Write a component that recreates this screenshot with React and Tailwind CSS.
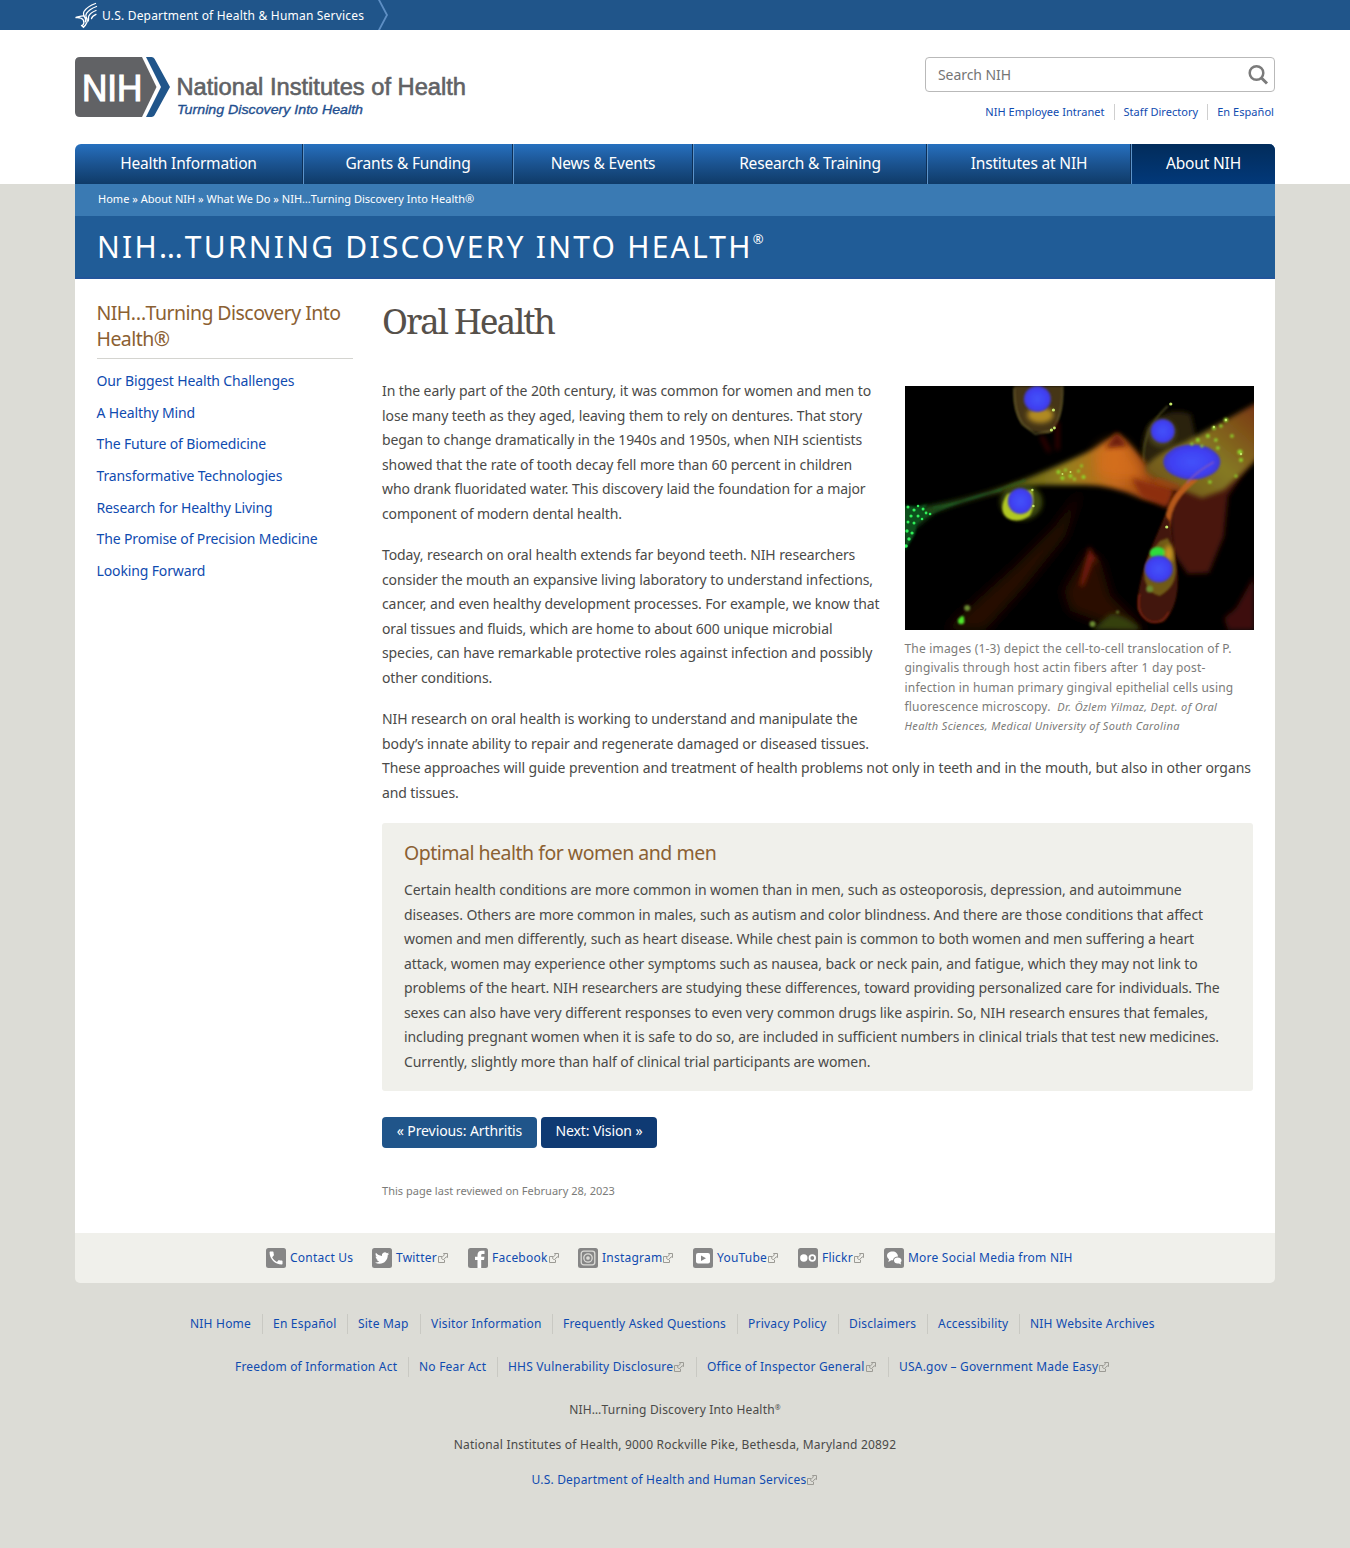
import React from "react";

const Ext = ({ c = "" }) => (
  <svg width="12" height="12" viewBox="0 0 12 12" fill="none" stroke="#9b9a94" strokeWidth="1" className={"inline-block shrink-0 " + c}>
    <path d="M5 4.500H1.500V10.500H7.500V8" />
    <path d="M6.500 1.500H10.500V5.500L9.200 4.800L6.300 8L4.300 6L7.400 2.900Z" />
  </svg>
);

const HhsLogo = () => (
  <svg width="23" height="28" viewBox="0 0 23 28" fill="none" stroke="#fff" strokeWidth="1.300" strokeLinecap="round">
    <path d="M20.500 2.500C16 4 11 7.500 9 10.500C8.200 11.800 8.300 13 8.800 14.500" />
    <path d="M21.500 5.500C17.500 7 13.500 9.500 11.500 12.300C10.600 13.600 10.600 15 11.200 16.500" />
    <path d="M21 9.500C18 10.700 15 12.800 13.800 15C13 16.600 14 18 13.200 20" />
    <path d="M21 13.300C18.500 14.300 17 15.500 16.500 17.500" />
    <path d="M1 16.300C3.500 15.700 6 14.800 8.800 14.800M1 16.600C4.500 16.300 7 17 8.300 19C9.300 21 9 23 7.500 24.500" />
    <path d="M11.200 16.500C12.700 18.500 12.700 21 10.700 23.500M8.800 14.800C10.300 16.500 11 18.500 10.400 20.800" />
    <path d="M6.500 24.500L8.500 26.300L10.500 24" />
  </svg>
);

const NihLogo = () => (
  <svg width="396" height="62" viewBox="0 0 396 62" fontFamily="Liberation Sans, Arial, sans-serif">
    <path d="M5 0H67L81.500 30L67 60H5Q0 60 0 55V5Q0 0 5 0Z" fill="#616265" />
    <path d="M71 0H76.500Q78.500 0 79.500 1.800L95 30L79.500 58.200Q78.500 60 76.500 60H71L86 30Z" fill="#20558a" />
    <text x="7" y="43.500" fontSize="37" textLength="60.500" lengthAdjust="spacingAndGlyphs" fill="#fff" stroke="#fff" strokeWidth="1.200">NIH</text>
    <text x="101.500" y="38" fontSize="23" textLength="289.500" lengthAdjust="spacingAndGlyphs" fill="#616265" stroke="#616265" strokeWidth="0.600">National Institutes of Health</text>
    <text x="102" y="56.500" fontSize="13.500" fontStyle="italic" textLength="186" lengthAdjust="spacingAndGlyphs" fill="#1f4f8f" stroke="#1f4f8f" strokeWidth="0.350">Turning Discovery Into Health</text>
  </svg>
);

const nav = [
  ["Health Information", "w-[229px]"],
  ["Grants & Funding", "w-[210px]"],
  ["News & Events", "w-[180px]"],
  ["Research & Training", "w-[234px]"],
  ["Institutes at NIH", "w-[204px]"],
];

const sideLinks = [
  "Our Biggest Health Challenges",
  "A Healthy Mind",
  "The Future of Biomedicine",
  "Transformative Technologies",
  "Research for Healthy Living",
  "The Promise of Precision Medicine",
  "Looking Forward",
];

const paragraphs = [
  [
    "In the early part of the 20th century, it was common for women and men to",
    "lose many teeth as they aged, leaving them to rely on dentures. That story",
    "began to change dramatically in the 1940s and 1950s, when NIH scientists",
    "showed that the rate of tooth decay fell more than 60 percent in children",
    "who drank fluoridated water. This discovery laid the foundation for a major",
    "component of modern dental health.",
  ],
  [
    "Today, research on oral health extends far beyond teeth. NIH researchers",
    "consider the mouth an expansive living laboratory to understand infections,",
    "cancer, and even healthy development processes. For example, we know that",
    "oral tissues and fluids, which are home to about 600 unique microbial",
    "species, can have remarkable protective roles against infection and possibly",
    "other conditions.",
  ],
  [
    "NIH research on oral health is working to understand and manipulate the",
    "body’s innate ability to repair and regenerate damaged or diseased tissues.",
    "These approaches will guide prevention and treatment of health problems not only in teeth and in the mouth, but also in other organs",
    "and tissues.",
  ],
];

const boxLines = [
  "Certain health conditions are more common in women than in men, such as osteoporosis, depression, and autoimmune",
  "diseases. Others are more common in males, such as autism and color blindness. And there are those conditions that affect",
  "women and men differently, such as heart disease. While chest pain is common to both women and men suffering a heart",
  "attack, women may experience other symptoms such as nausea, back or neck pain, and fatigue, which they may not link to",
  "problems of the heart. NIH researchers are studying these differences, toward providing personalized care for individuals. The",
  "sexes can also have very different responses to even very common drugs like aspirin. So, NIH research ensures that females,",
  "including pregnant women when it is safe to do so, are included in sufficient numbers in clinical trials that test new medicines.",
  "Currently, slightly more than half of clinical trial participants are women.",
];

const Lines = ({ lines }) =>
  lines.map((l, i) => (
    <React.Fragment key={i}>
      {l}
      {i < lines.length - 1 && <br />}
    </React.Fragment>
  ));

const specks = (list, fill) => list.map(([x, y, r], i) => <circle key={i} cx={x} cy={y} r={r} fill={fill} />);

const CellImage = () => (
  <svg width="349" height="244" viewBox="0 0 348 244" preserveAspectRatio="none" className="block">
    <defs>
      <filter id="b1" x="-20%" y="-20%" width="140%" height="140%"><feGaussianBlur stdDeviation="1" /></filter>
      <filter id="b3" x="-30%" y="-30%" width="160%" height="160%"><feGaussianBlur stdDeviation="2.500" /></filter>
      <filter id="b6" x="-40%" y="-40%" width="180%" height="180%"><feGaussianBlur stdDeviation="6" /></filter>
      <linearGradient id="body" x1="0" x2="1">
        <stop offset="0" stopColor="#0f4a1c" />
        <stop offset="0.300" stopColor="#3e4a12" />
        <stop offset="0.600" stopColor="#95801c" />
        <stop offset="0.780" stopColor="#c2681c" />
        <stop offset="1" stopColor="#7a2a0c" />
      </linearGradient>
      <linearGradient id="arm" x1="0" y1="1" x2="1" y2="0">
        <stop offset="0" stopColor="#6a4a14" />
        <stop offset="0.500" stopColor="#857a24" />
        <stop offset="1" stopColor="#7a3410" />
      </linearGradient>
      <radialGradient id="nuc">
        <stop offset="0" stopColor="#4452fa" />
        <stop offset="0.750" stopColor="#3f3ff2" />
        <stop offset="1" stopColor="#4038c8" />
      </radialGradient>
    </defs>
    <rect width="348" height="244" fill="#000" />
    <path d="M176 102L150 140L110 180L60 225L40 244H80L120 200L160 150Z" fill="#260b04" filter="url(#b6)" />
    <path d="M182 165L158 205L165 225L215 244H240L205 210L195 175Z" fill="#2c0a04" filter="url(#b6)" />
    <path d="M184 160L174 200L178 200L190 168L194 185Z" fill="#7a1d0a" filter="url(#b3)" />
    <path d="M268 100L348 72L322 110L318 150L303 187L282 188L266 165L264 130Z" fill="#4a1408" filter="url(#b3)" />
    <path d="M348 190L330 222L318 232L322 244H348Z" fill="#3d0c07" filter="url(#b3)" />
    <path d="M205 228Q220 228 236 244H186Z" fill="#343f10" filter="url(#b3)" />
    <path d="M238 80Q233 50 245 38Q262 20 285 28L292 60L262 90Z" fill="#2c2008" filter="url(#b3)" />
    <path d="M238 76Q236 44 262 20" stroke="#575520" strokeWidth="1.500" fill="none" filter="url(#b1)" />
    <path d="M-4 124Q60 116 120 93Q165 75 190 62L212 48Q228 60 243 82L270 100L262 118L235 112Q208 99 180 99L135 99Q90 104 30 126L0 150Z" fill="url(#body)" filter="url(#b3)" />
    <path d="M190 66Q212 44 224 66L240 92L215 94L192 90Z" fill="#d8701c" filter="url(#b6)" opacity="0.800" />
    <path d="M200 62L211 46L222 60Z" fill="#6d1c08" filter="url(#b3)" />
    <path d="M226 92L266 104L262 122L236 111Z" fill="#8d2f10" filter="url(#b3)" />
    <path d="M240 80Q255 64 280 56L352 16V72L318 104L296 112L276 104Q256 98 240 86Z" fill="url(#arm)" filter="url(#b3)" />
    <path d="M290 92Q264 112 262 135Q260 150 262 168" stroke="#c2601c" strokeWidth="6" fill="none" filter="url(#b1)" opacity="0.900" />
    <path d="M274 102Q262 98 250 94" stroke="#a34516" strokeWidth="5" fill="none" filter="url(#b3)" />
    <path d="M259 130L242 170Q230 208 232 224Q240 240 258 236Q274 220 272 185L264 135Z" fill="#421407" filter="url(#b1)" />
    <path d="M254 155Q236 176 239 194Q243 208 254 210Q272 200 270 180Q268 162 262 152Z" fill="#6f5a14" filter="url(#b1)" />
    <path d="M234 208Q230 228 243 235Q256 240 263 226" stroke="#8a2812" strokeWidth="1.500" fill="none" filter="url(#b1)" />
    <path d="M109 0Q107 20 114 34Q122 48 144 47Q158 36 157 0Z" fill="#453612" filter="url(#b1)" />
    <path d="M109 2Q108 24 117 38L130 48L146 45Q158 30 157 0" stroke="#83793c" strokeWidth="1.500" fill="none" opacity="0.700" filter="url(#b1)" />
    <ellipse cx="135" cy="29" rx="13" ry="8" fill="#b08a24" filter="url(#b3)" />
    <path d="M136 50L144 66M152 36V64" stroke="#44100a" strokeWidth="3" filter="url(#b3)" />
    <ellipse cx="116" cy="116" rx="21" ry="18" fill="#3c4a0c" filter="url(#b3)" />
    <path d="M102 108Q92 124 102 132Q112 138 124 130Q130 122 127 104Z" fill="#b0c822" filter="url(#b1)" />
    <ellipse cx="252" cy="167" rx="8" ry="6" fill="#2fdc3a" filter="url(#b1)" />
    <ellipse cx="263" cy="168" rx="4" ry="9" fill="#d09a20" filter="url(#b3)" />
    <circle cx="256" cy="47" r="14" fill="#4c451c" filter="url(#b3)" />
    <g filter="url(#b1)">
      <ellipse cx="132" cy="13" rx="13.500" ry="13" fill="url(#nuc)" />
      <ellipse cx="115" cy="115" rx="12.500" ry="13" fill="url(#nuc)" />
      <ellipse cx="257" cy="45" rx="12" ry="12" fill="url(#nuc)" />
      <ellipse cx="286" cy="76" rx="28.500" ry="17.500" fill="url(#nuc)" />
      <ellipse cx="253" cy="183" rx="14" ry="13.500" fill="url(#nuc)" />
    </g>
    <path d="M308 76Q290 86 281 97" stroke="#8f5ab0" strokeWidth="1.500" fill="none" filter="url(#b1)" opacity="0.800" />
    <path d="M28 122Q70 114 120 94M24 128Q60 112 96 104" stroke="#1f6a2c" strokeWidth="1" fill="none" filter="url(#b1)" />
    <g filter="url(#b1)">
      <path d="M0 119L12 121L22 118L18 127L26 128L12 137L10 148L0 165Z" fill="#08501c" />
    </g>
    {specks([[3, 121, 1.5], [9, 124, 1.6], [13, 120, 1.3], [18, 123, 1.5], [21, 127, 1.4], [6, 130, 1.6], [13, 130, 1.5], [17, 133, 1.3], [3, 136, 1.5], [9, 137, 1.5], [2, 145, 1.7], [7, 147, 1.6], [4, 153, 1.7], [1, 160, 1.8], [25, 128, 1.3]], "#2ff05a")}
    <g filter="url(#b1)">
      {specks([[56, 235, 3.200], [57, 232, 2]], "#4fe62a")}
      {specks([[62, 222, 3], [187, 238, 3], [212, 226, 1.500], [244, 203, 3.500]], "#6a8a30")}
      {specks([[153, 86, 2], [160, 84, 1.5], [165, 90, 2], [157, 92, 2], [173, 85, 1.5], [178, 91, 2], [169, 93, 1.5], [176, 80, 1.4], [308, 42, 2], [320, 34, 2.2], [315, 40, 1.8], [302, 50, 2], [292, 54, 2], [286, 58, 1.6], [326, 50, 1.8], [334, 66, 2.5], [335, 74, 2], [312, 62, 1.8], [330, 90, 1.6], [304, 96, 1.8], [310, 54, 1.8], [296, 60, 1.5]], "#8fd62c")}
    </g>
    {specks([[148, 24, 1.6], [146, 44, 1.6], [149, 42, 1.4], [265, 18, 1.6], [308, 41, 1.2], [320, 34, 1.2], [335, 68, 1.2], [157, 88, 1], [165, 86, 1], [261, 141, 1.6], [128, 120, 1.3], [127, 104, 1.2]], "#c6e86a")}
  </svg>
);

const socialIcons = {
  phone: (
    <path transform="translate(1.400 1.400) scale(0.720)" fill="#fff" d="M6.620 10.790c1.440 2.830 3.760 5.140 6.590 6.590l2.200-2.200c.27-.27.67-.36 1.020-.24 1.120.37 2.330.57 3.570.57.55 0 1 .45 1 1V20c0 .55-.45 1-1 1-9.390 0-17-7.610-17-17 0-.55.45-1 1-1h3.500c.55 0 1 .45 1 1 0 1.250.2 2.450.57 3.570.11.35.03.74-.25 1.020l-2.200 2.200z" />
  ),
  twitter: (
    <path transform="translate(3 3) scale(0.590)" fill="#fff" d="M23.953 4.570a10 10 0 01-2.825.775 4.958 4.958 0 002.163-2.723c-.951.555-2.005.959-3.127 1.184a4.920 4.920 0 00-8.384 4.482C7.690 8.095 4.067 6.130 1.640 3.162a4.822 4.822 0 00-.666 2.475c0 1.710.870 3.213 2.188 4.096a4.904 4.904 0 01-2.228-.616v.06a4.923 4.923 0 003.946 4.827 4.996 4.996 0 01-2.212.085 4.936 4.936 0 004.604 3.417 9.867 9.867 0 01-6.102 2.105c-.39 0-.779-.023-1.170-.067a13.995 13.995 0 007.557 2.209c9.053 0 13.998-7.496 13.998-13.985 0-.21 0-.42-.015-.63A9.935 9.935 0 0024 4.590z" />
  ),
  facebook: <path fill="#fff" d="M9.500 20V12H7V8.800H9.500V7C9.500 4.300 11.200 2.800 13.700 2.800H16.500V6H14.700C13.700 6 13.200 6.500 13.200 7.300V8.800H16.500L16 12H13.200V20Z" />,
  instagram: (
    <g fill="none" stroke="#dcdcd8" strokeWidth="1.300">
      <rect x="3.200" y="3.200" width="13.600" height="13.600" rx="2.500" />
      <circle cx="10" cy="10" r="4.200" />
      <circle cx="10" cy="10" r="1.200" fill="#dcdcd8" />
    </g>
  ),
  youtube: (
    <g>
      <rect x="3" y="5" width="14" height="10.500" rx="2" fill="#fff" />
      <path d="M8 7.500L13 10.200L8 13Z" fill="#868686" />
    </g>
  ),
  flickr: (
    <g>
      <circle cx="5.800" cy="10" r="3.700" fill="#fff" />
      <circle cx="14.300" cy="10" r="2.800" fill="none" stroke="#fff" strokeWidth="1.800" />
    </g>
  ),
  chat: (
    <g fill="#fff">
      <path d="M8.500 3.500C5.300 3.500 3 5.300 3 7.800C3 9.300 3.900 10.500 5 11.300L4.300 14L7.300 12.200H9C9.400 10 11.300 8.600 14 8.600C13.800 5.600 11.800 3.500 8.500 3.500Z" />
      <path d="M13.600 9.600C11.500 9.600 10 10.900 10 12.500C10 14.200 11.500 15.500 13.600 15.500H15L17 16.500L16.600 14.600C17.200 14 17.500 13.300 17.500 12.500C17.500 10.900 15.800 9.600 13.600 9.600Z" />
    </g>
  ),
};

const social = [
  ["phone", "Contact Us", false, "w-[106px]"],
  ["twitter", "Twitter", true, "w-[96px]"],
  ["facebook", "Facebook", true, "w-[110px]"],
  ["instagram", "Instagram", true, "w-[115px]"],
  ["youtube", "YouTube", true, "w-[105px]"],
  ["flickr", "Flickr", true, "w-[86px]"],
  ["chat", "More Social Media from NIH", false, "w-[200px]"],
];

const foot1 = [
  ["NIH Home", "w-[72px]"],
  ["En Español", "w-[85px]"],
  ["Site Map", "w-[73px]"],
  ["Visitor Information", "w-[132px]"],
  ["Frequently Asked Questions", "w-[185px]"],
  ["Privacy Policy", "w-[101px]"],
  ["Disclaimers", "w-[89px]"],
  ["Accessibility", "w-[92px]"],
  ["NIH Website Archives", "w-[140px]"],
];
const foot2 = [
  ["Freedom of Information Act", "w-[173px]"],
  ["No Fear Act", "w-[89px]"],
  ["HHS Vulnerability Disclosure", "w-[199px]", true],
  ["Office of Inspector General", "w-[192px]", true],
  ["USA.gov – Government Made Easy", "w-[230px]", true],
];

const FootRow = ({ items, pad }) => (
  <ul className={"flex h-5 items-center text-[12px] leading-5 tracking-[0.21px] text-[#0f4bb0] " + pad}>
    {items.map(([t, w, ext], i) => (
      <li key={t} className={"flex h-5 shrink-0 items-center whitespace-nowrap " + w + (i ? " border-l border-[#c9c9c3] pl-[10px]" : "")}>
        {t}
        {ext && <Ext />}
      </li>
    ))}
  </ul>
);

export default function App() {
  return (
    <div className="h-[1548px] w-[1350px] overflow-hidden bg-[#dcdcd6] font-['Noto_Sans',sans-serif] text-[#4a4a48]">
      <div className="h-[30px] bg-[#20558a]">
        <div className="mx-auto flex h-[30px] w-[1200px] items-center">
          <HhsLogo />
          <span className="ml-1 w-[274px] whitespace-nowrap pt-0.5 text-[12px] tracking-[0.2px] text-white">U.S. Department of Health &amp; Human Services</span>
          <svg width="14" height="30" viewBox="0 0 14 30" fill="none" stroke="#5e8fc4" strokeWidth="1.800">
            <path d="M2.500 -1L11 15L2.500 31" />
          </svg>
        </div>
      </div>

      <header className="h-[154px] bg-white">
        <div className="mx-auto w-[1200px]">
          <div className="flex h-[114px] justify-between pt-[27px]">
            <NihLogo />
            <div className="w-[350px]">
              <div className="flex h-[35px] items-center justify-between rounded-[4px] border border-[#b9b9b9] bg-white pl-3 pr-[5px] text-[14px] tracking-[-0.07px] text-[#757575]">
                Search NIH
                <svg width="22" height="22" viewBox="0 0 22 22" fill="none" stroke="#7b7b7b">
                  <circle cx="9.500" cy="9" r="6.800" strokeWidth="2.500" />
                  <path d="M14.500 14L20 19.500" strokeWidth="3" />
                </svg>
              </div>
              <ul className="mt-3 flex h-4 items-center justify-end whitespace-nowrap pr-px text-[11px] leading-4 tracking-[0.04px] text-[#0f4bb0]">
                <li className="pr-[9px]">NIH Employee Intranet</li>
                <li className="border-l border-[#cfcfcf] px-[9px]">Staff Directory</li>
                <li className="border-l border-[#cfcfcf] pl-[9px]">En Español</li>
              </ul>
            </div>
          </div>
          <nav className="flex h-10 overflow-hidden rounded-t-[6px] bg-linear-to-b from-[#2670bf] via-[#1b5390] via-50% to-[#0f3b68] text-[15.5px] tracking-[-0.18px] text-white">
            {nav.map(([t, w]) => (
              <div key={t} className={"flex h-10 shrink-0 items-center justify-center border-r border-[#5c93c9] " + w}>
                <div className="flex h-10 w-full items-center justify-center border-r border-[#0d2f57] whitespace-nowrap">{t}</div>
              </div>
            ))}
            <div className="flex h-10 w-[143px] items-center justify-center bg-linear-to-b from-[#022c5b] to-[#02397a]">About NIH</div>
          </nav>
        </div>
      </header>

      <div className="mx-auto w-[1200px]">
        <div className="h-8 whitespace-nowrap bg-[#3a7ab3] pl-[23px] text-[11px] leading-[29px] tracking-[0.015px] text-white">
          Home » About NIH » What We Do » NIH…Turning Discovery Into Health®
        </div>
        <div className="flex h-[63px] items-start whitespace-nowrap border-b-2 border-[#22559b] bg-[#205c97] pl-[22px] text-white">
          <span className="text-[30px] leading-[62px] tracking-[2.230px]">NIH…TURNING DISCOVERY INTO HEALTH</span>
          <span className="text-[13px] leading-[46px]">®</span>
        </div>

        <main className="flex h-[954px] bg-white">
          <aside className="ml-[21.500px] w-[256px] pt-[21px] text-[14px]">
            <h2 className="border-b border-[#d4d4d0] pb-1.5 text-[19.5px] leading-[26px] tracking-[-0.550px] text-[#8b6032]">
              NIH…Turning Discovery Into
              <br />
              Health®
            </h2>
            <ul className="pt-[6px] tracking-[-0.130px] text-[#0f4bb0]">
              {sideLinks.map((t) => (
                <li key={t} className="h-[31.700px] whitespace-nowrap leading-[31.700px]">{t}</li>
              ))}
            </ul>
          </aside>

          <article className="ml-[29.500px] w-[871px] pt-[18px] text-[14px] leading-[24.500px] tracking-[-0.096px]">
            <h1 className="h-[82px] whitespace-nowrap font-['Noto_Serif',serif] text-[35px] leading-[48px] tracking-[-1.900px] text-[#56504a]">Oral Health</h1>
            <div className="whitespace-nowrap">
              <figure className="float-right mt-[7px] w-[348.500px] text-[12px] leading-[19.300px] tracking-[0.190px] text-[#7b7b79]">
                <CellImage />
                <figcaption className="pt-[9px]">
                  The images (1-3) depict the cell-to-cell translocation of P.
                  <br />
                  gingivalis through host actin fibers after 1 day post-
                  <br />
                  infection in human primary gingival epithelial cells using
                  <br />
                  fluorescence microscopy.&nbsp; <i className="text-[11px] tracking-[0.330px]">Dr. Özlem Yilmaz, Dept. of Oral</i>
                  <br />
                  <i className="text-[11px] tracking-[0.330px]">Health Sciences, Medical University of South Carolina</i>
                </figcaption>
              </figure>
              {paragraphs.map((p, i) => (
                <p key={i} className="mb-[17px]">
                  <Lines lines={p} />
                </p>
              ))}
            </div>
            <section className="mt-[18px] h-[268px] whitespace-nowrap rounded-[3px] bg-[#f0f0eb] px-[22px] pt-[17px]">
              <h2 className="h-[38px] text-[19.5px] leading-[26px] tracking-[-0.5px] text-[#8b6032]">Optimal health for women and men</h2>
              <p>
                <Lines lines={boxLines} />
              </p>
            </section>
            <div className="mt-[26px] flex gap-1 whitespace-nowrap leading-[28px] text-white">
              <span className="h-[31px] w-[155px] rounded-[4px] bg-[#20558a] text-center">« Previous: Arthritis</span>
              <span className="h-[31px] w-[116px] rounded-[4px] bg-[#0f3a73] text-center">Next: Vision »</span>
            </div>
            <p className="mt-[31px] text-[11px] tracking-[0.020px] text-[#7b7b79]">This page last reviewed on February 28, 2023</p>
          </article>
        </main>

        <div className="flex h-[50px] items-center rounded-b-[5px] bg-[#f0f0eb] pl-[191px] text-[12px] tracking-[0.220px] text-[#0f4bb0]">
          {social.map(([k, t, ext, w]) => (
            <div key={k} className={"flex shrink-0 items-center whitespace-nowrap " + w}>
              <svg width="20" height="20" viewBox="0 0 20 20" className="mr-1 shrink-0">
                <rect width="20" height="20" rx="2.500" fill="#868686" />
                {socialIcons[k]}
              </svg>
              {t}
              {ext && <Ext />}
            </div>
          ))}
        </div>
      </div>

      <footer className="pt-[31px] text-[12px] leading-5 tracking-[0.190px]">
        <FootRow items={foot1} pad="pl-[190px]" />
        <div className="h-[23px]" />
        <FootRow items={foot2} pad="pl-[235px]" />
        <p className="mt-[23px] text-center">
          NIH…Turning Discovery Into Health<span className="relative -top-1 text-[7px]">®</span>
        </p>
        <p className="mt-[13px] text-center">National Institutes of Health, 9000 Rockville Pike, Bethesda, Maryland 20892</p>
        <p className="mt-[15px] flex items-center justify-center text-[#0f4bb0]">
          U.S. Department of Health and Human Services
          <Ext />
        </p>
      </footer>
    </div>
  );
}
